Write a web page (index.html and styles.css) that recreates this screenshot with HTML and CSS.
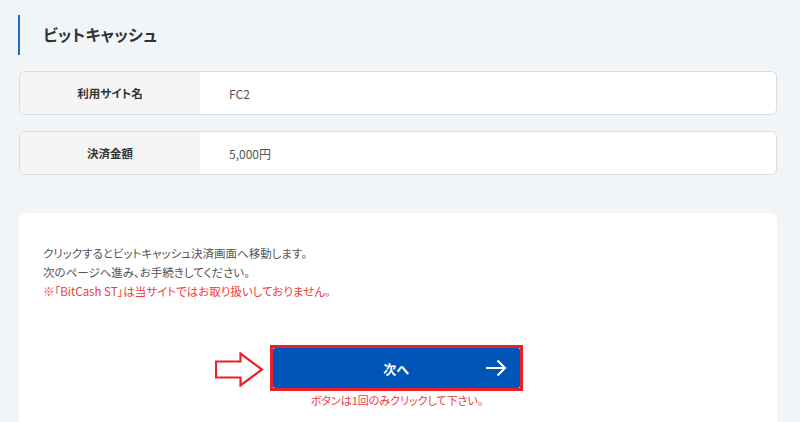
FILE: index.html
```html
<!DOCTYPE html>
<html lang="ja">
<head>
<meta charset="utf-8">
<link rel="stylesheet" href="styles.css">
</head>
<body>
<div class="page">
  <h1 class="title">ビットキャッシュ</h1>
  <div class="row">
    <div class="label">利用サイト名</div>
    <div class="value">FC2</div>
  </div>
  <div class="row">
    <div class="label">決済金額</div>
    <div class="value">5,000円</div>
  </div>
  <div class="panel">
    <p class="msg">クリックするとビットキャッシュ決済画面へ移動します。<br>次のページへ進み、お手続きしてください。<br><span class="warn">※「BitCash ST」は当サイトではお取り扱いしておりません。</span></p>
    <div class="action">
      <div class="btnwrap">
        <svg class="pointer" width="49" height="35" viewBox="0 0 49 35"><path d="M1 9.5 H25.5 V1.5 L47 17.5 L25.5 33.5 V25.5 H1 Z" fill="#fff" stroke="#e8212b" stroke-width="2.2" stroke-linejoin="miter"/></svg>
        <div class="btnframe">
          <a class="btn" href="#">次へ<svg class="arr" width="22" height="18" viewBox="0 0 22 18"><path d="M1 9 H20 M12.5 1.5 L20 9 L12.5 16.5" fill="none" stroke="#fff" stroke-width="2.2"/></svg></a>
        </div>
      </div>
      <p class="note">ボタンは1回のみクリックして下さい。</p>
    </div>
  </div>
</div>
</body>
</html>
```

FILE: styles.css
```css
* { box-sizing: border-box; }
html, body { margin: 0; padding: 0; }
body {
  background: #f2f5f8;
  font-family: "Noto Sans CJK JP", "Noto Sans", sans-serif;
  font-feature-settings: "palt";
  color: #333;
  height: 422px;
  overflow: hidden;
}
.page {
  padding: 15px 23px 0 19px;
}
.title {
  margin: 0 0 0 -1px;
  border-left: 2px solid #1f6fc5;
  height: 40px;
  line-height: 38px;
  padding-left: 23px;
  font-size: 16px;
  font-weight: bold;
  color: #333;
  letter-spacing: 0.3px;
}
.row {
  display: flex;
  height: 44px;
  margin-top: 16px;
  border: 1px solid #dcdcdc;
  border-radius: 6px;
  background: #fff;
  overflow: hidden;
}
.label {
  width: 180px;
  background: #f5f5f5;
  display: flex;
  align-items: center;
  justify-content: center;
  font-size: 11.5px;
  font-weight: bold;
  color: #333;
}
.value {
  display: flex;
  align-items: center;
  padding-left: 29px;
  font-size: 12px;
  color: #555;
}
.panel {
  margin-top: 38px;
  background: #fff;
  border-radius: 6px 6px 0 0;
  padding: 31px 24px 0 24px;
  height: 209px;
}
.msg {
  margin: 0;
  font-size: 11.5px;
  line-height: 19px;
  color: #555;
}
.warn { color: #f03a3a; }
.action {
  margin-top: 44px;
  display: flex;
  flex-direction: column;
  align-items: center;
}
.btnwrap {
  position: relative;
  margin-left: -4px;
}
.pointer {
  position: absolute;
  left: -55px;
  top: 7px;
}
.btnframe {
  width: 253px;
  height: 46px;
  border: 3px solid #e8212b;
  background: #fff;
}
.btn {
  position: relative;
  display: flex;
  align-items: center;
  justify-content: center;
  height: 100%;
  background: #0055b8;
  border-radius: 2px;
  color: #fff;
  font-weight: bold;
  font-size: 13px;
  text-decoration: none;
}
.arr {
  position: absolute;
  right: 13px;
  top: 11px;
}
.note {
  margin: 1px 0 0 0;
  font-size: 11px;
  line-height: 16px;
  color: #f03a3a;
  margin-left: -2px;
}
```
